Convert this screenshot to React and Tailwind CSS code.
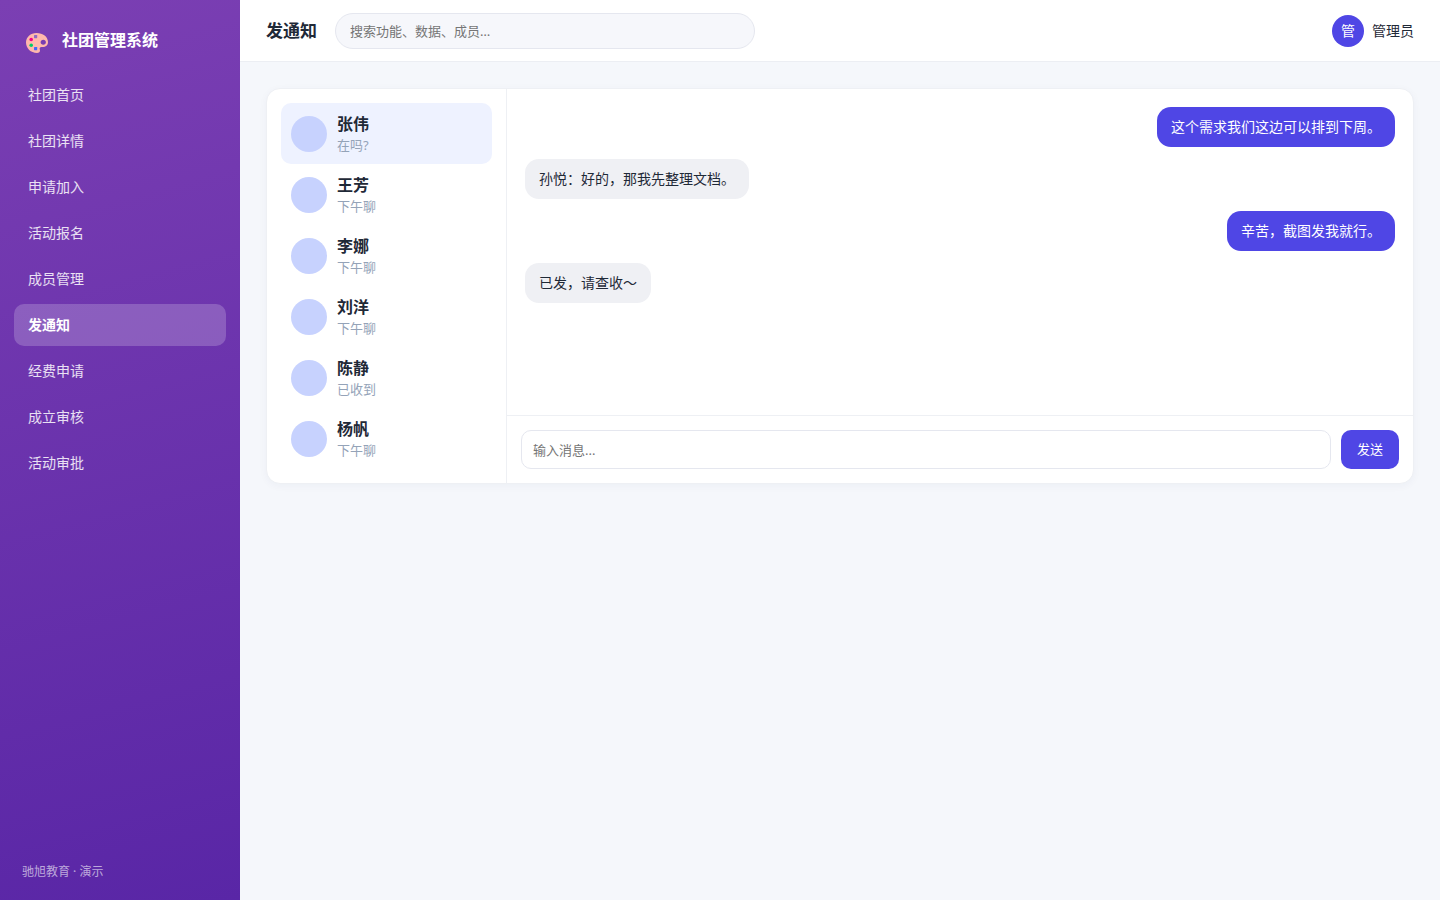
const navItems = ['社团首页', '社团详情', '申请加入', '活动报名', '成员管理', '发通知', '经费申请', '成立审核', '活动审批'];

const contacts = [
  { name: '张伟', note: '在吗?' },
  { name: '王芳', note: '下午聊' },
  { name: '李娜', note: '下午聊' },
  { name: '刘洋', note: '下午聊' },
  { name: '陈静', note: '已收到' },
  { name: '杨帆', note: '下午聊' },
];

const messages = [
  { mine: true, text: '这个需求我们这边可以排到下周。' },
  { mine: false, text: '孙悦：好的，那我先整理文档。' },
  { mine: true, text: '辛苦，截图发我就行。' },
  { mine: false, text: '已发，请查收～' },
];

function PaletteIcon() {
  return (
    <svg width="22" height="20" viewBox="0 0 22 20" aria-hidden="true">
      <path
        fill="#ffb8ac"
        fillRule="evenodd"
        d="M10.500 0C4.600 0 0 4.200 0 9.600 0 15.400 4.800 20 11 20c2 0 3-1 3-2.400 0-1.300-.6-1.900-.3-2.700.3-.7 1.300-.8 2.700-.8 3.500 0 5.600-1.800 5.600-5C22 3.700 17 0 10.500 0ZM17.300 6.700c1.500 0 2.600 1 2.600 2.500s-1.100 2.500-2.600 2.500-2.700-1-2.700-2.500 1.200-2.500 2.700-2.500Z"
      />
      <rect x="8" y="2" width="3.200" height="3.200" rx=".6" fill="#9068c4" />
      <circle cx="5.200" cy="6.500" r="1.800" fill="#f5008b" />
      <circle cx="5.200" cy="12.300" r="1.800" fill="#00cb6a" />
      <rect x="8" y="14" width="3.200" height="3.200" rx=".6" fill="#4169fa" />
    </svg>
  );
}

function Sidebar() {
  return (
    <aside className="flex w-60 shrink-0 flex-col bg-[linear-gradient(165deg,#7b3fb3,#5926a6)] px-3.5 py-5 text-white">
      <div className="flex h-10 items-center gap-3.5 px-3">
        <span className="pt-1.5">
          <PaletteIcon />
        </span>
        <span className="text-base font-bold">社团管理系统</span>
      </div>
      <nav className="mt-3.5 flex flex-col gap-1">
        {navItems.map((item) => (
          <a
            key={item}
            href="#"
            aria-current={item === '发通知' ? 'page' : undefined}
            className={
              item === '发通知'
                ? 'flex h-[42px] items-center rounded-[10px] bg-white/20 px-3.5 text-sm font-bold'
                : 'flex h-[42px] items-center rounded-[10px] px-3.5 text-sm text-white/85'
            }
          >
            {item}
          </a>
        ))}
      </nav>
      <p className="mt-auto px-2 text-xs leading-4 text-white/60">驰旭教育 · 演示</p>
    </aside>
  );
}

function Header() {
  return (
    <header className="flex items-center gap-[18px] border-b border-[#eceef3] bg-white px-[26px] py-3">
      <h1 className="text-[17px] font-bold">发通知</h1>
      <input
        type="search"
        aria-label="搜索"
        placeholder="搜索功能、数据、成员…"
        className="h-9 w-[420px] rounded-full border border-[#e5e7ef] bg-[#f6f7fb] px-3.5 text-[13px] placeholder:text-[#757575]"
      />
      <div className="ml-auto flex h-[37px] items-center gap-2 text-sm">
        <span className="grid size-8 place-items-center rounded-full bg-[#4f46e5] text-sm text-white">管</span>
        <span>管理员</span>
      </div>
    </header>
  );
}

function Contacts() {
  return (
    <ul className="w-60 shrink-0 border-r border-[#eef0f4] p-3.5">
      {contacts.map((c, i) => (
        <li key={c.name}>
          <button
            type="button"
            className={
              i === 0
                ? 'flex w-full items-center gap-2.5 rounded-[10px] bg-[#eef2ff] p-2.5 text-left'
                : 'flex w-full items-center gap-2.5 rounded-[10px] p-2.5 text-left'
            }
          >
            <span className="size-9 shrink-0 rounded-full bg-[#c7d2fe]" />
            <span className="flex flex-col">
              <span className="text-base leading-[23px] font-bold">{c.name}</span>
              <span className="text-[13px] leading-[18px] text-[#94a3b8]">{c.note}</span>
            </span>
          </button>
        </li>
      ))}
    </ul>
  );
}

function Chat() {
  return (
    <section className="flex min-w-0 flex-1 flex-col">
      <div className="flex flex-1 flex-col gap-3 p-[18px]">
        {messages.map((m) => (
          <p
            key={m.text}
            className={
              m.mine
                ? 'self-end rounded-[14px] bg-[#4f46e5] px-3.5 py-2.5 text-sm leading-5 text-white'
                : 'self-start rounded-[14px] bg-[#eff0f4] px-3.5 py-2.5 text-sm leading-5'
            }
          >
            {m.text}
          </p>
        ))}
      </div>
      <form className="flex gap-2.5 border-t border-[#eef0f4] p-3.5" onSubmit={(e) => e.preventDefault()}>
        <input
          type="text"
          aria-label="输入消息"
          placeholder="输入消息..."
          className="h-[39px] min-w-0 flex-1 rounded-[10px] border border-[#e5e7ef] bg-white px-[11px] text-[13px] placeholder:text-[#757575]"
        />
        <button type="submit" className="rounded-[10px] bg-[#4f46e5] px-4 text-[13px] text-white">
          发送
        </button>
      </form>
    </section>
  );
}

export default function App() {
  return (
    <div className="flex min-h-screen bg-[#f5f7fb] font-['Noto_Sans','Noto_Sans_CJK_SC',sans-serif] text-[#1f2937]">
      <Sidebar />
      <div className="flex min-w-0 flex-1 flex-col">
        <Header />
        <main className="p-[26px]">
          <div className="flex overflow-hidden rounded-[14px] border border-[#eef0f4] bg-white shadow-[0_2px_8px_rgba(30,40,90,0.04)]">
            <Contacts />
            <Chat />
          </div>
        </main>
      </div>
    </div>
  );
}
